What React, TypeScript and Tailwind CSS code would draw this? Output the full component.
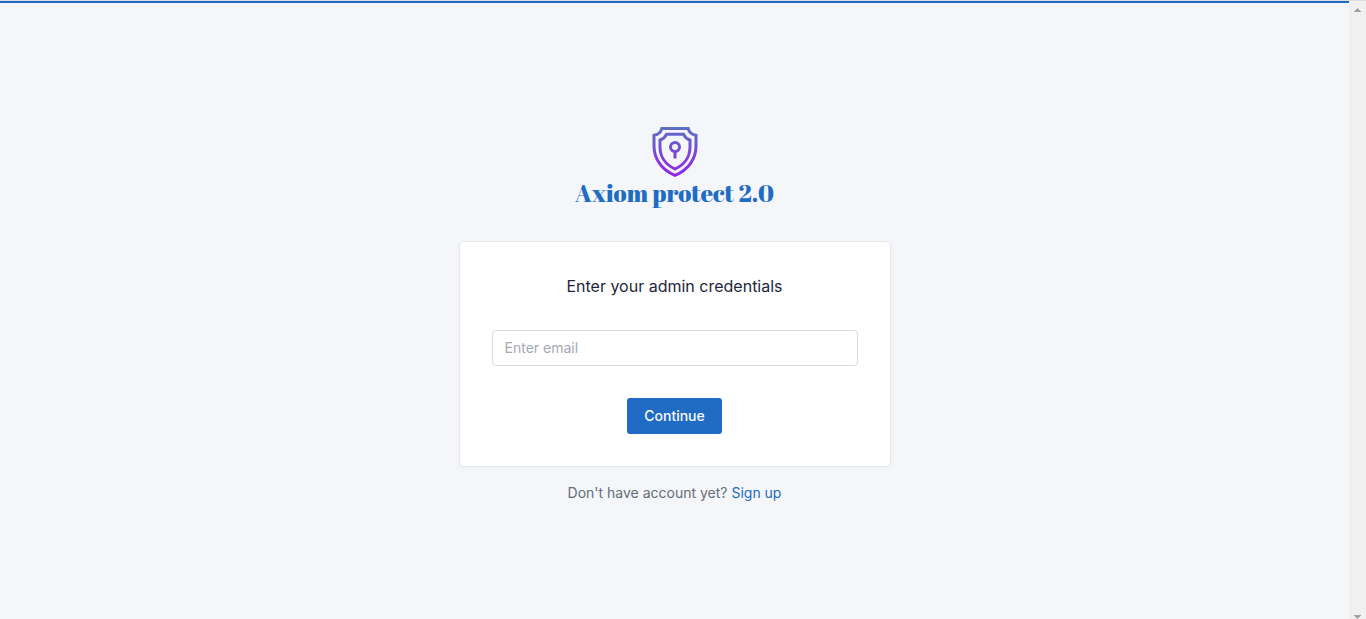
import React from "react";

function ShieldLogo() {
  return (
    <svg className="overflow-visible" width="45" height="52" viewBox="0 0 45 52" fill="none" aria-hidden="true">
      <defs>
        <linearGradient id="shield" gradientUnits="userSpaceOnUse" x1="23" y1="0" x2="23" y2="52">
          <stop offset="0" stopColor="#5a72c4" />
          <stop offset="1" stopColor="#9a1fe8" />
        </linearGradient>
      </defs>
      <g stroke="url(#shield)" strokeWidth="3">
        <path d="M9.8 2.5H36.2C37 6 39.8 8.600 44 9.300V20C44 33 36 44 23 49.300C10 44 2 33 2 20V9.300C6.200 8.600 9 6 9.800 2.500Z" />
        <path d="M14.500 8.300H31.500C32.800 11 35 13 38 14V21C38 31 32 39 23 43C14 39 8 31 8 21V14C11 13 13.200 11 14.500 8.300Z" />
        <circle cx="23" cy="21" r="4.500" />
        <path d="M23 25V32.500" />
      </g>
    </svg>
  );
}

function ScrollTrack() {
  return (
    <div className="flex w-[17px] shrink-0 flex-col items-center justify-between bg-[#f0f0f0] pt-[7px]" aria-hidden="true">
      <svg width="7" height="4" viewBox="0 0 7 4" fill="#a3a3a3" shapeRendering="crispEdges">
        <path d="M3 0h1v1h1v1h1v1h1v1H0V3h1V2h1V1h1z" />
      </svg>
      <svg width="7" height="4" viewBox="0 0 7 4" fill="#a3a3a3" shapeRendering="crispEdges">
        <path d="M0 0h7v1H6v1H5v1H4v1H3V3H2V2H1V1H0z" />
      </svg>
    </div>
  );
}

export default function App() {
  return (
    <div className="flex min-h-screen flex-col border-t border-[#dadbdd] bg-[#f4f6fa] font-['Inter',sans-serif] text-sm leading-5 text-[#1d273b]">
      <div className="flex flex-1">
        <main className="flex flex-1 flex-col items-center justify-center border-t-2 border-[#206bc4] px-4 pt-[7px]">
          <header className="mb-8 flex flex-col items-center">
            <ShieldLogo />
            <h1 className="font-['Abril_Fatface','Liberation_Serif',serif] text-2xl leading-[31px] font-normal text-[#206bc4]">
              Axiom protect 2.0
            </h1>
          </header>
          <form
            className="flex w-full max-w-[432px] flex-col items-center rounded border border-[#e6e8eb] bg-white p-8 shadow-[0_2px_4px_rgba(29,39,59,0.04)]"
            onSubmit={(event) => event.preventDefault()}
          >
            <h2 className="mb-8 text-base leading-6">Enter your admin credentials</h2>
            <input
              type="email"
              aria-label="Email"
              placeholder="Enter email"
              className="mb-8 h-9 w-full rounded border border-[#d9dbde] bg-white px-3 pb-px text-sm placeholder:text-[#a5a9b1]"
            />
            <button type="submit" className="h-9 rounded-[3px] bg-[#206bc4] px-[17px] text-sm font-medium text-[#f8fafc]">
              Continue
            </button>
          </form>
          <p className="mt-4 text-[#656d77]">
            Don't have account yet?{" "}
            <a href="#signup" className="text-[#206bc4]">
              Sign up
            </a>
          </p>
        </main>
        <ScrollTrack />
      </div>
    </div>
  );
}
